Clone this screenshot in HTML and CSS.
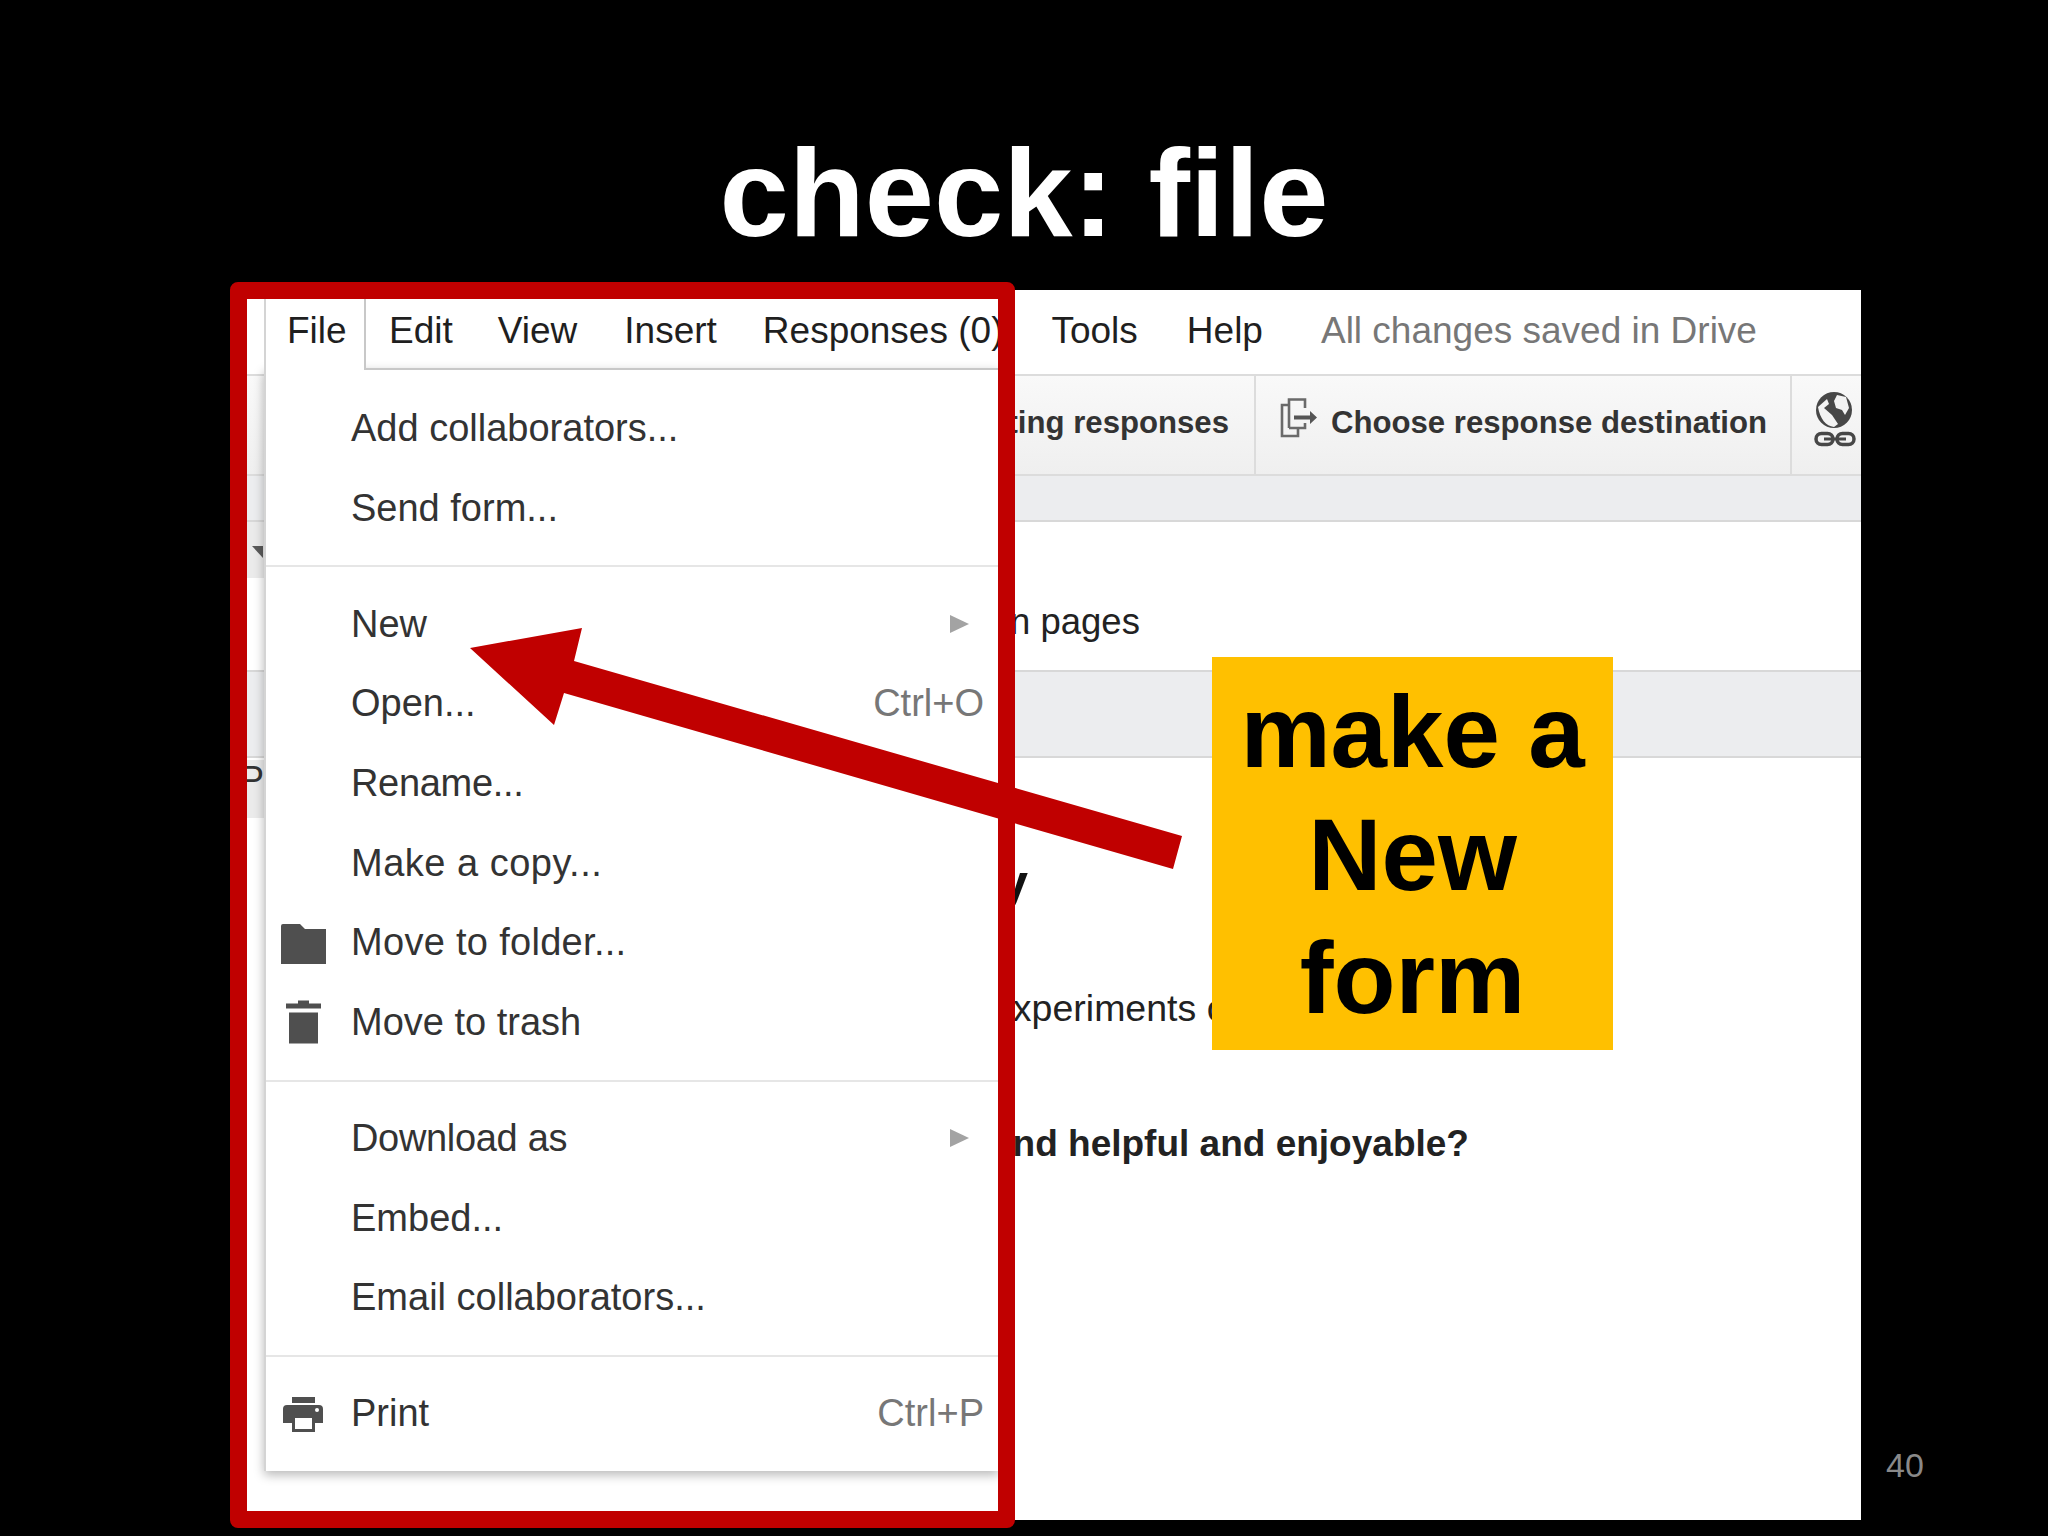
FILE: index.html
```html
<!DOCTYPE html>
<html lang="en">
<head>
<meta charset="utf-8">
<title>check: file</title>
<link rel="stylesheet" href="styles.css">
</head>
<body>
<main class="slide">
  <h1 class="title">check: file</h1>

  <section class="shot">
    <div class="menubar">
      <span class="tab">File</span>
      <span class="mi mi-edit">Edit</span>
      <span class="mi mi-view">View</span>
      <span class="mi mi-insert">Insert</span>
      <span class="mi mi-resp">Responses (0)</span>
      <span class="mi mi-tools">Tools</span>
      <span class="mi mi-help">Help</span>
      <span class="status">All changes saved in Drive</span>
    </div>

    <div class="toolbar">
      <div class="tool tool-accept">Accepting responses</div>
      <div class="tool tool-dest">
        <svg class="i-dest" viewBox="0 0 38 40" aria-hidden="true">
          <path d="M9 30V1.500H25V10M25 25V30H9M9 7H2V38H18V30" fill="none" stroke="#6a6a6a" stroke-width="2.600"/>
          <path d="M14 17.500H30V13L37 19.500L30 26V21.500H14Z" fill="#555"/>
        </svg>
        <span>Choose response destination</span>
      </div>
      <div class="tool tool-globe">
        <svg class="i-globe" viewBox="0 0 44 58" aria-hidden="true">
          <circle cx="21" cy="20" r="18" fill="#474747"/>
          <path d="M5 17L14 9L16 14L11 18L19 25L25 34L21 37C13 36 7 29 5 17Z" fill="#f3f3f3"/>
          <path d="M24 5L33 7L36 18L32 25L29 20L23 18L21 11Z" fill="#f3f3f3"/>
          <rect x="3" y="43.500" width="17" height="11" rx="5.500" fill="none" stroke="#474747" stroke-width="3.500"/>
          <rect x="24" y="43.500" width="17" height="11" rx="5.500" fill="none" stroke="#474747" stroke-width="3.500"/>
          <rect x="11" y="47.500" width="22" height="3" fill="#474747"/>
        </svg>
      </div>
    </div>

    <div class="band band-top"></div>

    <div class="pagebar"><span class="pages">n pages</span></div>

    <div class="band band-mid"></div>

    <div class="form">
      <div class="form-title">y</div>
      <div class="form-desc">experiments on</div>
      <div class="form-q">and helpful and enjoyable?</div>
    </div>

    <span class="stub stub-a"></span>
    <span class="stub stub-b"><span class="stub-p">P</span></span>
    <span class="stub-tri"></span>

    <nav class="menu">
      <div class="row"><span class="ico"></span><span class="label">Add collaborators...</span></div>
      <div class="row"><span class="ico"></span><span class="label">Send form...</span></div>
      <div class="sep"></div>
      <div class="row"><span class="ico"></span><span class="label">New</span><span class="caret"></span></div>
      <div class="row"><span class="ico"></span><span class="label">Open...</span><span class="key">Ctrl+O</span></div>
      <div class="row"><span class="ico"></span><span class="label tight">Rename...</span></div>
      <div class="row"><span class="ico"></span><span class="label wide">Make a copy...</span></div>
      <div class="row">
        <span class="ico"><svg viewBox="0 0 46 46" aria-hidden="true"><path d="M2 4H19L24 9H45V44H0V6A2 2 0 0 1 2 4Z" fill="#4f4f4f"/></svg></span>
        <span class="label loose">Move to folder...</span>
      </div>
      <div class="row">
        <span class="ico"><svg viewBox="0 0 46 46" aria-hidden="true"><path d="M17 0.500H28V3.500H40V8.500H5V3.500H17ZM8 12.500H37V43.500H8Z" fill="#4f4f4f"/></svg></span>
        <span class="label">Move to trash</span>
      </div>
      <div class="sep"></div>
      <div class="row"><span class="ico"></span><span class="label tight">Download as</span><span class="caret"></span></div>
      <div class="row"><span class="ico"></span><span class="label">Embed...</span></div>
      <div class="row"><span class="ico"></span><span class="label">Email collaborators...</span></div>
      <div class="sep"></div>
      <div class="row">
        <span class="ico"><svg viewBox="0 0 46 46" aria-hidden="true"><path d="M11 7H34V13H11ZM6 15H38A4 4 0 0 1 42 19V33H34V42H11V33H2V19A4 4 0 0 1 6 15Z" fill="#4f4f4f"/><path d="M14 28H31V39H14Z" fill="#fff"/><circle cx="36" cy="20" r="2" fill="#fff"/></svg></span>
        <span class="label">Print</span><span class="key">Ctrl+P</span>
      </div>
    </nav>
  </section>

  <div class="frame"></div>

  <svg class="arrow" viewBox="0 0 2048 1536" aria-hidden="true">
    <polygon points="470,648 582,628 574,661 1182,836 1173,869 564,693 554,725" fill="#c00000"/>
  </svg>

  <div class="callout">make a<br>New<br>form</div>

  <div class="pageno">40</div>
</main>
</body>
</html>
```

FILE: styles.css
```css
* { box-sizing: border-box; }

html, body {
  margin: 0;
  padding: 0;
  background: #000;
}

.slide {
  position: relative;
  width: 2048px;
  height: 1536px;
  overflow: hidden;
  background: #000;
  font-family: "Liberation Sans", Arial, sans-serif;
}

.title {
  margin: 0;
  height: 290px;
  padding-top: 123px;
  font-size: 124.500px;
  line-height: 140px;
  font-weight: 700;
  color: #fff;
  text-align: center;
}

.shot {
  position: relative;
  isolation: isolate;
  width: 1621px;
  height: 1230px;
  margin-left: 240px;
  background: #fff;
  overflow: hidden;
}

.menubar {
  display: flex;
  align-items: flex-start;
  height: 84px;
  padding-left: 24px;
  font-size: 37px;
  line-height: 82px;
  color: #1f1f1f;
}

.tab {
  position: relative;
  z-index: 3;
  width: 102px;
  height: 80px;
  padding-left: 21px;
  background: #fff;
  border-left: 2px solid #d4d4d4;
  border-right: 2px solid #c8c8c8;
}

.mi-edit { margin-left: 23px; }
.mi-view { margin-left: 45px; }
.mi-insert { margin-left: 47px; }
.mi-resp { margin-left: 46px; }
.mi-tools { margin-left: 48px; }
.mi-help { margin-left: 49px; }

.status {
  margin-left: 58px;
  color: #777;
}

.toolbar {
  display: flex;
  height: 102px;
  border-top: 2px solid #dcdcdc;
  border-bottom: 2px solid #dcdcdc;
  background: linear-gradient(#f9f9f9, #efefef);
  font-size: 31.150px;
  font-weight: 700;
  color: #333;
}

.tool {
  display: flex;
  align-items: center;
  border-right: 2px solid #dcdcdc;
}

.tool-accept {
  justify-content: flex-end;
  width: 1016px;
  padding-right: 25px;
  padding-bottom: 4px;
}

.tool-dest {
  width: 536px;
  padding-left: 24px;
  padding-bottom: 4px;
  gap: 13px;
}

.tool-globe {
  flex: 1;
  padding-left: 21px;
  padding-bottom: 2px;
  border-right: 0;
}

.i-dest { width: 38px; height: 40px; margin-top: -10px; }
.i-globe { width: 44px; height: 58px; margin-top: -10px; }

.band {
  background: #ecedef;
}

.band-top {
  height: 46px;
  border-bottom: 2px solid #d8d8d8;
}

.pagebar {
  height: 148px;
  padding: 78px 0 0 770px;
  font-size: 36.500px;
  line-height: 44px;
  color: #222;
}

.band-mid {
  height: 88px;
  border-top: 2px solid #d8d8d8;
  border-bottom: 2px solid #d8d8d8;
}

.form {
  display: flex;
  flex-direction: column;
  padding-left: 752px;
  font-size: 37.500px;
  line-height: 44px;
  color: #222;
}

.form-title {
  margin: 94px 0 0 6px;
  font-size: 54px;
  line-height: 60px;
  font-weight: 700;
  color: #111;
}

.form-desc { margin-top: 74px; }

.form-q {
  margin: 92px 0 0 0;
  font-size: 37px;
  font-weight: 700;
}

.stub {
  position: absolute;
  left: 0;
  width: 26px;
  background: #ebebeb;
}

.stub-a { top: 232px; height: 56px; }

.stub-b {
  top: 470px;
  height: 58px;
}

.stub-p {
  position: absolute;
  left: 0;
  top: -2px;
  font-size: 36px;
  line-height: 44px;
  color: #333;
}

.stub-tri {
  position: absolute;
  left: 12px;
  top: 256px;
  width: 0;
  height: 0;
  border-top: 12px solid #5a5a5a;
  border-left: 11px solid transparent;
}

.menu {
  position: absolute;
  z-index: 2;
  left: 24px;
  top: 78px;
  width: 735px;
  height: 1103px;
  padding-top: 19px;
  background: #fff;
  border-top: 2px solid #c8c8c8;
  border-left: 2px solid #d4d4d4;
  box-shadow: 0 4px 10px rgba(0, 0, 0, 0.28);
  font-size: 38px;
  color: #333;
}

.row {
  display: flex;
  align-items: center;
  height: 79.700px;
  padding-right: 15px;
}

.ico {
  display: flex;
  align-items: center;
  flex: none;
  width: 85px;
  padding-left: 15px;
}

.ico svg {
  display: block;
  width: 46px;
  height: 46px;
}

.label { flex: 1; }

.tight { letter-spacing: -0.320px; }
.loose { letter-spacing: 0.300px; }
.wide { letter-spacing: 0.500px; }

.key { color: #777; }

.caret {
  width: 0;
  height: 0;
  margin-right: 15px;
  border-left: 19px solid #a3a3a3;
  border-top: 9px solid transparent;
  border-bottom: 9px solid transparent;
}

.sep {
  height: 2px;
  margin: 17px 0;
  background: #e6e6e6;
}

.frame {
  position: absolute;
  left: 230px;
  top: 282px;
  width: 785px;
  height: 1246px;
  border: 17px solid #c00000;
  border-radius: 8px;
}

.arrow {
  position: absolute;
  left: 0;
  top: 0;
  width: 2048px;
  height: 1536px;
}

.callout {
  position: absolute;
  left: 1212px;
  top: 657px;
  width: 401px;
  height: 393px;
  padding-top: 14px;
  background: #ffc000;
  font-size: 101.500px;
  line-height: 123px;
  font-weight: 700;
  color: #000;
  text-align: center;
}

.pageno {
  position: absolute;
  left: 1886px;
  top: 1445px;
  font-size: 34px;
  line-height: 40px;
  color: #898989;
}
```
